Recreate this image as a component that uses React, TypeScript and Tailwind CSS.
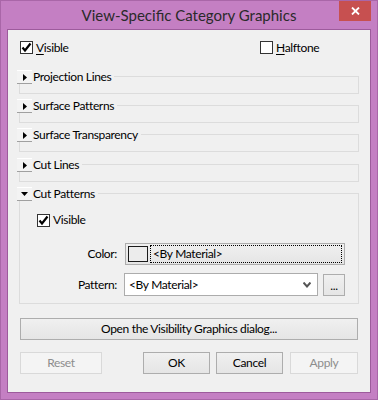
import React from 'react'

function CheckBox({ checked }: { checked: boolean }) {
  return (
    <span className="w-[13px] h-[13px] border border-[#333333] bg-white flex items-center justify-center shrink-0">
      {checked && (
        <svg width="11" height="11" viewBox="0 0 11 11">
          <path d="M1.5 5.5 L4 8.5 L9.5 1.5" fill="none" stroke="#000" strokeWidth="2.2" />
        </svg>
      )}
    </span>
  )
}

function Expander({ open }: { open: boolean }) {
  return (
    <span className="w-[15px] h-[14px] border-t border-t-white border-b border-b-[#a0a0a0] bg-[#f3f3f3] flex items-center justify-center">
      {open ? (
        <svg width="7" height="4" viewBox="0 0 7 4">
          <path d="M0 0 L7 0 L3.5 4 Z" fill="#000" />
        </svg>
      ) : (
        <svg width="4" height="7" viewBox="0 0 4 7">
          <path d="M0 0 L4 3.5 L0 7 Z" fill="#000" />
        </svg>
      )}
    </span>
  )
}

function Group({
  title,
  open,
  className,
  children,
}: {
  title: string
  open?: boolean
  className: string
  children?: React.ReactNode
}) {
  return (
    <div className={`relative mx-[11px] border border-[#dcdcdc] ${className}`}>
      <div className="absolute left-[-3px] top-[-7px] flex items-center">
        <Expander open={!!open} />
        <span className="bg-[#f0f0f0] pl-[1px] pr-[3px] leading-[14px]">{title}</span>
      </div>
      {children}
    </div>
  )
}

const BTN =
  'h-[22px] border border-[#adadad] bg-gradient-to-b from-[#f0f0f0] to-[#e5e5e5] flex items-center justify-center'
const BTN_OFF = 'h-[22px] border border-[#d9d9d9] bg-[#f4f4f4] text-[#8d8d8d] flex items-center justify-center'

export default function App() {
  return (
    <div className="w-[378px] h-[400px] bg-[#c47fc3] border border-[#a966a8] overflow-hidden text-[12px] tracking-[-0.35px] text-black font-['Lato','Noto_Sans',sans-serif]">
      <div className="relative h-[28px] flex items-center justify-center">
        <span className="text-[15px] tracking-normal text-[#2a2a2a] pt-[1px]">View-Specific Category Graphics</span>
        <div className="absolute top-[-1px] right-[6px] w-[32px] h-[21px] bg-[#c75050] flex items-center justify-center">
          <svg width="9" height="8" viewBox="0 0 9 8">
            <path d="M1 0.5 L8 7.5 M8 0.5 L1 7.5" stroke="#fff" strokeWidth="1.8" />
          </svg>
        </div>
      </div>

      <div className="ml-[6px] w-[364px] h-[364px] border border-[#9d5b9c] bg-[#f0f0f0]">
        <div className="pt-[11px] pl-[12px] flex items-center h-[24px]">
          <div className="w-[240px] flex items-center gap-[3px]">
            <CheckBox checked />
            <span>
              <u className="underline-offset-2">V</u>isible
            </span>
          </div>
          <div className="flex items-center gap-[3px]">
            <CheckBox checked={false} />
            <span>
              <u className="underline-offset-2">H</u>alftone
            </span>
          </div>
        </div>

        <Group title="Projection Lines" className="mt-[22px] h-[18px]" />
        <Group title="Surface Patterns" className="mt-[11px] h-[18px]" />
        <Group title="Surface Transparency" className="mt-[11px] h-[18px]" />
        <Group title="Cut Lines" className="mt-[12px] h-[18px]" />
        <Group title="Cut Patterns" open className="mt-[11px] h-[111px]">
          <div className="pt-[17px] pl-[17px] flex items-center gap-[3px]">
            <CheckBox checked />
            <span>Visible</span>
          </div>
          <div className="mt-[14px] flex items-center">
            <span className="w-[97px] text-right">Color:</span>
            <div className="ml-[8px] w-[220px] h-[22px] border border-[#adadad] bg-gradient-to-b from-[#f0f0f0] to-[#e5e5e5] flex items-center pl-[2px] pr-[2px] gap-[2px]">
              <span className="w-[20px] h-[16px] border border-[#1a1a1a] bg-[#ececec]" />
              <span className="flex-1 h-[18px] border border-dotted border-black flex items-center pl-[2px]">
                &lt;By Material&gt;
              </span>
            </div>
          </div>
          <div className="mt-[8px] flex items-center">
            <span className="w-[97px] text-right">Pattern:</span>
            <div className="ml-[7px] w-[194px] h-[23px] border border-[#acacac] bg-white flex items-center pl-[4px] pr-[6px]">
              <span className="flex-1">&lt;By Material&gt;</span>
              <svg width="8" height="6" viewBox="0 0 8 6">
                <path d="M0.5 0.5 L4 4.5 L7.5 0.5" fill="none" stroke="#555" strokeWidth="2" />
              </svg>
            </div>
            <div className={`ml-[5px] w-[22px] ${BTN}`}>
              <span className="leading-none pt-[3px]">...</span>
            </div>
          </div>
        </Group>

        <div className={`mt-[14px] ml-[12px] w-[338px] ${BTN}`}>Open the Visibility Graphics dialog...</div>

        <div className="mt-[12px] ml-[12px] flex">
          <div className={`w-[82px] ${BTN_OFF}`}>Reset</div>
          <div className={`ml-[41px] w-[67px] ${BTN}`}>OK</div>
          <div className={`ml-[6px] w-[67px] ${BTN}`}>Cancel</div>
          <div className={`ml-[7px] w-[68px] ${BTN_OFF}`}>Apply</div>
        </div>
      </div>
    </div>
  )
}
